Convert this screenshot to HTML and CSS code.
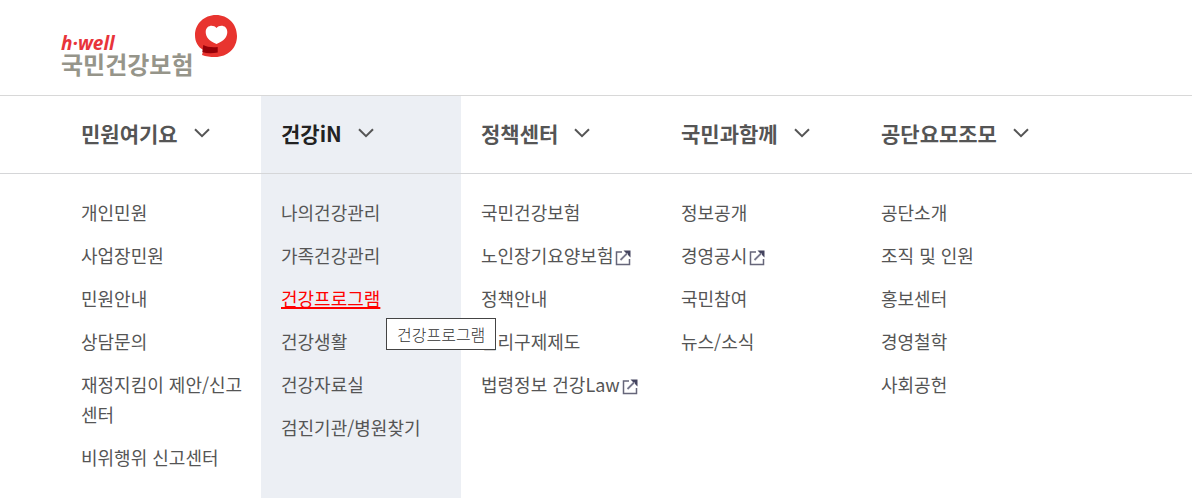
FILE: index.html
```html
<!DOCTYPE html>
<html lang="ko">
<head>
  <meta charset="UTF-8" />
  <meta name="viewport" content="width=device-width, initial-scale=1" />
  <title>국민건강보험</title>
  <link rel="stylesheet" href="styles.css">
</head>
<body>

  <svg class="sprite" aria-hidden="true">
    <symbol id="chevron" viewBox="0 0 16 10">
      <path d="M1 1.2 L8 8.2 L15 1.2" fill="none" stroke="currentColor" stroke-width="2" />
    </symbol>
    <symbol id="external" viewBox="0 0 16 16">
      <path d="M7 2 H1.500 V14.500 H14.500 V9" fill="none" stroke="#66667a" stroke-width="1.500" />
      <path d="M5.500 10 L12.500 3" fill="none" stroke="#77778c" stroke-width="1.800" />
      <path d="M8.500 .5 H15.500 V7.500 L13 5 V3 H11 Z" fill="#44445f" />
    </symbol>
  </svg>

  <header class="header">
    <a class="logo" href="#">
      <span class="logo-text">
        <span class="logo-en">h·well</span>
        <span class="logo-ko">국민건강보험</span>
      </span>
      <svg class="logo-mark" viewBox="0 0 42 42" aria-hidden="true">
        <path d="M21 0 C33 0 42 9 42 21 C42 33 33 42 20 42 C15 42 11 41.500 7 40 L8.300 35 C3 32 0 27 0 20 C0 9 9 0 21 0 Z" fill="#e8342f" />
        <path d="M8.300 30 C12 32 17 32.500 22.700 32 V37.500 C17 38.500 12 38.500 7.300 37 Z" fill="#960008" />
        <path d="M21.500 29 C14 26 10.700 22 10.700 17 C10.700 10 18.500 9 21.500 13 C24.500 9 32.300 10 32.300 17 C32.300 22 29 26 21.500 29 Z" fill="#fff" />
      </svg>
    </a>
  </header>

  <nav class="gnb">
    <ul class="gnb-list">
      <li class="gnb-item">
        <button class="gnb-head" type="button">민원여기요 <svg class="chevron"><use href="#chevron" /></svg></button>
        <ul class="sub">
          <li><a href="#">개인민원</a></li>
          <li><a href="#">사업장민원</a></li>
          <li><a href="#">민원안내</a></li>
          <li><a href="#">상담문의</a></li>
          <li><a href="#">재정지킴이 제안/신고센터</a></li>
          <li><a href="#">비위행위 신고센터</a></li>
        </ul>
      </li>
      <li class="gnb-item active">
        <button class="gnb-head" type="button">건강iN <svg class="chevron"><use href="#chevron" /></svg></button>
        <ul class="sub">
          <li><a href="#">나의건강관리</a></li>
          <li><a href="#">가족건강관리</a></li>
          <li class="has-tip"><a class="on" href="#">건강프로그램</a><span class="tip" role="tooltip">건강프로그램</span></li>
          <li><a href="#">건강생활</a></li>
          <li><a href="#">건강자료실</a></li>
          <li><a href="#">검진기관/병원찾기</a></li>
        </ul>
      </li>
      <li class="gnb-item">
        <button class="gnb-head" type="button">정책센터 <svg class="chevron"><use href="#chevron" /></svg></button>
        <ul class="sub">
          <li><a href="#">국민건강보험</a></li>
          <li><a href="#">노인장기요양보험<svg class="external"><use href="#external" /></svg></a></li>
          <li><a href="#">정책안내</a></li>
          <li><a href="#">권리구제제도</a></li>
          <li><a href="#">법령정보 건강Law<svg class="external"><use href="#external" /></svg></a></li>
        </ul>
      </li>
      <li class="gnb-item">
        <button class="gnb-head" type="button">국민과함께 <svg class="chevron"><use href="#chevron" /></svg></button>
        <ul class="sub">
          <li><a href="#">정보공개</a></li>
          <li><a href="#">경영공시<svg class="external"><use href="#external" /></svg></a></li>
          <li><a href="#">국민참여</a></li>
          <li><a href="#">뉴스/소식</a></li>
        </ul>
      </li>
      <li class="gnb-item">
        <button class="gnb-head" type="button">공단요모조모 <svg class="chevron"><use href="#chevron" /></svg></button>
        <ul class="sub">
          <li><a href="#">공단소개</a></li>
          <li><a href="#">조직 및 인원</a></li>
          <li><a href="#">홍보센터</a></li>
          <li><a href="#">경영철학</a></li>
          <li><a href="#">사회공헌</a></li>
        </ul>
      </li>
    </ul>
  </nav>

</body>
</html>
```
FILE: styles.css
```css
* {
  box-sizing: border-box;
}
body {
  margin: 0;
  min-height: 100vh;
  display: flex;
  flex-direction: column;
  background: #fff;
  color: #555;
  font-family: "Noto Sans CJK KR", sans-serif;
  font-size: 18px;
  line-height: 30px;
}
ul {
  margin: 0;
  padding: 0;
  list-style: none;
}
a {
  color: inherit;
  text-decoration: none;
}
.sprite {
  position: absolute;
  width: 0;
  height: 0;
}

/* header */
.header {
  padding: 15px 61px 18px;
}
.logo {
  display: inline-flex;
  align-items: flex-start;
  gap: 2px;
  height: 62px;
  vertical-align: top;
}
.logo-text {
  display: flex;
  flex-direction: column;
  padding-top: 18px;
}
.logo-en {
  color: #e8343a;
  font: italic 700 19px/20px "Open Sans", sans-serif;
}
.logo-ko {
  color: #96958a;
  font-size: 24px;
  font-weight: 700;
  line-height: 22px;
}
.logo-mark {
  width: 42px;
  height: 42px;
}

/* menu */
.gnb {
  position: relative;
  flex: 1;
  display: flex;
  border-top: 1px solid #d8d8d8;
}
.gnb::after {
  content: "";
  position: absolute;
  top: 77px;
  left: 0;
  right: 0;
  border-top: 1px solid #d5d6d8;
}
.gnb-list {
  display: flex;
  padding: 0 61px;
}
.gnb-item {
  width: 200px;
  padding: 0 10px 12px 20px;
}
.gnb-item.active {
  background: #eceff4;
}
.gnb-head {
  display: flex;
  align-items: center;
  gap: 16px;
  height: 78px;
  padding: 0 0 4px;
  border: 0;
  background: none;
  color: #555;
  font: inherit;
  font-size: 21px;
  font-weight: 700;
  white-space: nowrap;
  cursor: pointer;
}
.active .gnb-head {
  color: #222;
}
.chevron {
  width: 16px;
  height: 10px;
  color: #555;
}
.sub {
  display: flex;
  flex-direction: column;
  gap: 13px;
  padding-top: 23px;
}
.sub a:hover,
.sub .on {
  color: #f00;
  text-decoration: underline;
  text-decoration-thickness: 2px;
}
.external {
  width: 16px;
  height: 16px;
  margin-left: 2px;
  vertical-align: -3px;
}
.has-tip {
  position: relative;
}
.tip {
  position: absolute;
  top: 35px;
  left: 105px;
  z-index: 1;
  padding: 0 10px;
  border: 1px solid #444;
  background: #fff;
  color: #333;
  font-size: 16px;
  font-weight: 300;
  white-space: nowrap;
}
```
